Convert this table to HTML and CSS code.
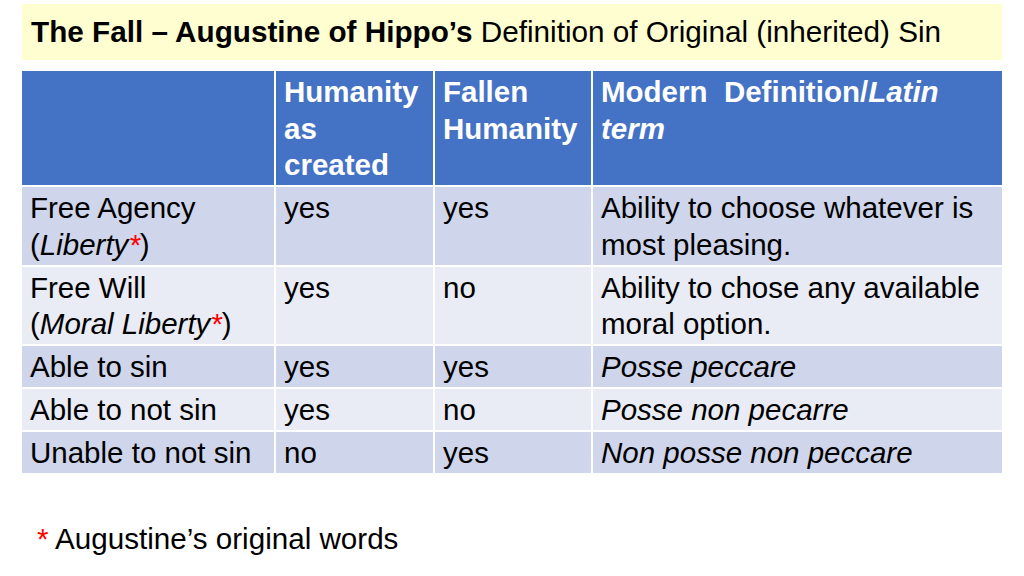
FILE: index.html
```html
<!DOCTYPE html>
<html>
<head>
<meta charset="utf-8">
<link rel="stylesheet" href="styles.css">
</head>
<body>
<div class="slide">
  <div class="title"><b>The Fall – Augustine of Hippo’s</b> Definition of Original (inherited) Sin</div>
  <table class="grid">
    <colgroup>
      <col class="c1"><col class="c2"><col class="c3"><col class="c4">
    </colgroup>
    <thead>
      <tr>
        <th></th>
        <th>Humanity as created</th>
        <th>Fallen Humanity</th>
        <th>Modern&nbsp; Definition/<i>Latin term</i></th>
      </tr>
    </thead>
    <tbody>
      <tr class="odd">
        <td>Free Agency<br>(<i>Liberty</i><i class="star">*</i>)</td>
        <td>yes</td>
        <td>yes</td>
        <td>Ability to choose whatever is most pleasing.</td>
      </tr>
      <tr class="even">
        <td>Free Will<br>(<i>Moral Liberty</i><i class="star">*</i>)</td>
        <td>yes</td>
        <td>no</td>
        <td>Ability to chose any available moral option.</td>
      </tr>
      <tr class="odd">
        <td>Able to sin</td>
        <td>yes</td>
        <td>yes</td>
        <td><i>Posse peccare</i></td>
      </tr>
      <tr class="even">
        <td>Able to not sin</td>
        <td>yes</td>
        <td>no</td>
        <td><i>Posse non pecarre</i></td>
      </tr>
      <tr class="odd">
        <td>Unable to not sin</td>
        <td>no</td>
        <td>yes</td>
        <td><i>Non posse non peccare</i></td>
      </tr>
    </tbody>
  </table>
  <div class="note"><span class="star">*</span> Augustine’s original words</div>
</div>
</body>
</html>
```
FILE: styles.css
```css
html, body {
  margin: 0;
  padding: 0;
  background: #ffffff;
}
.slide {
  width: 1024px;
  height: 576px;
  overflow: hidden;
  font-family: "Liberation Sans", Arial, sans-serif;
  color: #000;
  padding: 4px 22px 0 22px;
  box-sizing: border-box;
}
.title {
  background: #fefed0;
  height: 56px;
  font-size: 29.7px;
  line-height: 55px;
  padding-left: 9px;
  white-space: nowrap;
}
.grid {
  margin-top: 11px;
  width: 980px;
  border-collapse: collapse;
  table-layout: fixed;
  font-size: 29.5px;
  line-height: 36.5px;
}
.c1 { width: 253px; }
.c2 { width: 159px; }
.c3 { width: 158px; }
.c4 { width: 410px; }
.grid th, .grid td {
  text-align: left;
  vertical-align: top;
  padding: 3px 7px 1.5px 8px;
  border: 2px solid #fff;
}
.grid tr > :first-child { border-left: 0; }
.grid tr > :last-child { border-right: 0; }
.grid thead tr > * { border-top: 0; }
.grid tbody tr:last-child > * { border-bottom: 0; }
.grid th {
  background: #4472c4;
  color: #fff;
  font-weight: bold;
}
.grid .odd td { background: #cfd5ea; }
.grid .even td { background: #e9ebf5; }
.star {
  color: #ff0000;
}
.note {
  margin-top: 49px;
  font-size: 29.6px;
  line-height: 34px;
  padding-left: 15px;
}
```
